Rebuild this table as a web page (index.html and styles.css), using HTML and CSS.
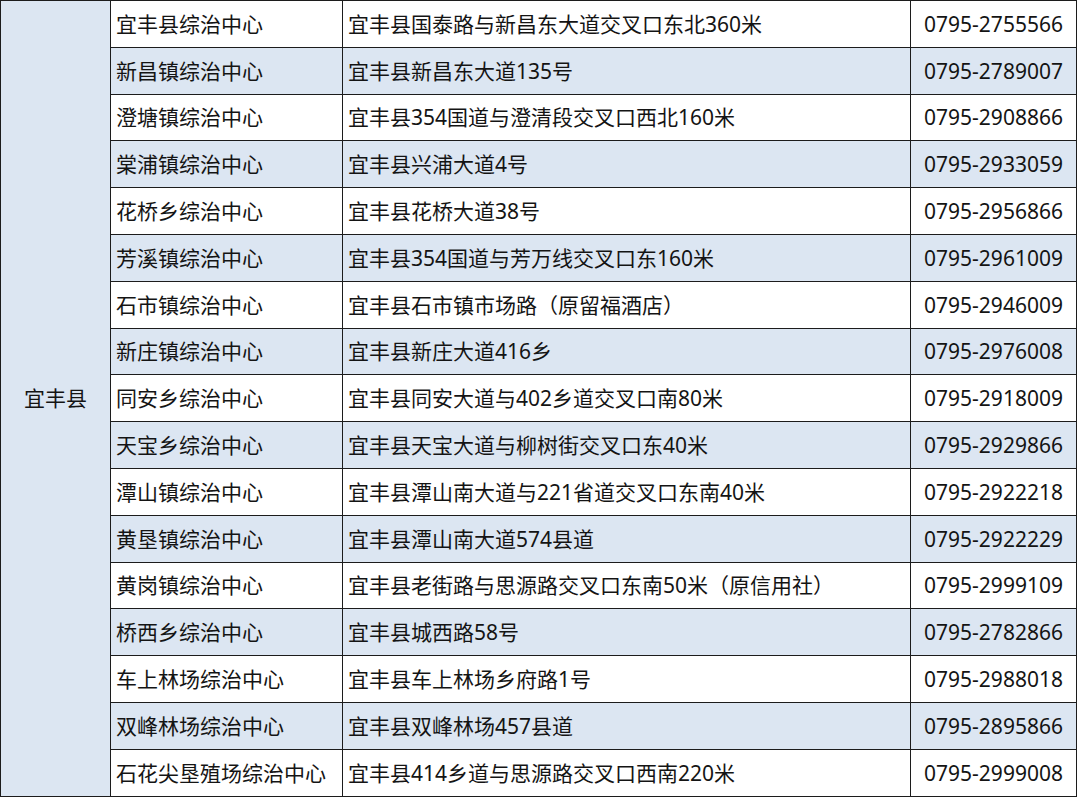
FILE: index.html
```html
<!DOCTYPE html>
<html lang="zh-CN">
<head>
<meta charset="utf-8">
<link rel="stylesheet" href="styles.css">
</head>
<body>
<table class="sheet">
  <colgroup>
    <col class="c-county">
    <col class="c-name">
    <col class="c-addr">
    <col class="c-tel">
  </colgroup>
  <tbody>
    <tr><td class="county" rowspan="17">宜丰县</td><td>宜丰县综治中心</td><td>宜丰县国泰路与新昌东大道交叉口东北360米</td><td class="tel">0795-2755566</td></tr>
    <tr class="alt"><td>新昌镇综治中心</td><td>宜丰县新昌东大道135号</td><td class="tel">0795-2789007</td></tr>
    <tr><td>澄塘镇综治中心</td><td>宜丰县354国道与澄清段交叉口西北160米</td><td class="tel">0795-2908866</td></tr>
    <tr class="alt"><td>棠浦镇综治中心</td><td>宜丰县兴浦大道4号</td><td class="tel">0795-2933059</td></tr>
    <tr><td>花桥乡综治中心</td><td>宜丰县花桥大道38号</td><td class="tel">0795-2956866</td></tr>
    <tr class="alt"><td>芳溪镇综治中心</td><td>宜丰县354国道与芳万线交叉口东160米</td><td class="tel">0795-2961009</td></tr>
    <tr><td>石市镇综治中心</td><td>宜丰县石市镇市场路（原留福酒店）</td><td class="tel">0795-2946009</td></tr>
    <tr class="alt"><td>新庄镇综治中心</td><td>宜丰县新庄大道416乡</td><td class="tel">0795-2976008</td></tr>
    <tr><td>同安乡综治中心</td><td>宜丰县同安大道与402乡道交叉口南80米</td><td class="tel">0795-2918009</td></tr>
    <tr class="alt"><td>天宝乡综治中心</td><td>宜丰县天宝大道与柳树街交叉口东40米</td><td class="tel">0795-2929866</td></tr>
    <tr><td>潭山镇综治中心</td><td>宜丰县潭山南大道与221省道交叉口东南40米</td><td class="tel">0795-2922218</td></tr>
    <tr class="alt"><td>黄垦镇综治中心</td><td>宜丰县潭山南大道574县道</td><td class="tel">0795-2922229</td></tr>
    <tr><td>黄岗镇综治中心</td><td>宜丰县老街路与思源路交叉口东南50米（原信用社）</td><td class="tel">0795-2999109</td></tr>
    <tr class="alt"><td>桥西乡综治中心</td><td>宜丰县城西路58号</td><td class="tel">0795-2782866</td></tr>
    <tr><td>车上林场综治中心</td><td>宜丰县车上林场乡府路1号</td><td class="tel">0795-2988018</td></tr>
    <tr class="alt"><td>双峰林场综治中心</td><td>宜丰县双峰林场457县道</td><td class="tel">0795-2895866</td></tr>
    <tr><td>石花尖垦殖场综治中心</td><td>宜丰县414乡道与思源路交叉口西南220米</td><td class="tel">0795-2999008</td></tr>
  </tbody>
</table>
</body>
</html>
```
FILE: styles.css
```css
html, body {
  margin: 0;
  padding: 0;
  background: #ffffff;
}

.sheet {
  border-collapse: collapse;
  table-layout: fixed;
  width: 1076px;
  font-family: "Noto Sans", "Noto Sans CJK SC", sans-serif;
  font-size: 21px;
  color: #141414;
}

.c-county { width: 110px; }
.c-name { width: 232px; }
.c-addr { width: 568px; }
.c-tel { width: 166px; }

.sheet tr {
  height: 46.8px;
}

.sheet td {
  border: 1px solid #1c1c1c;
  padding: 0 0 0 5px;
  vertical-align: middle;
  white-space: nowrap;
  overflow: hidden;
  line-height: 24px;
  background: #ffffff;
}

.sheet tr.alt td {
  background: #dce6f2;
}

.sheet td.county {
  background: #dce6f2;
  text-align: center;
  padding: 0;
}

.sheet td.tel {
  text-align: center;
  padding: 0;
}
```
